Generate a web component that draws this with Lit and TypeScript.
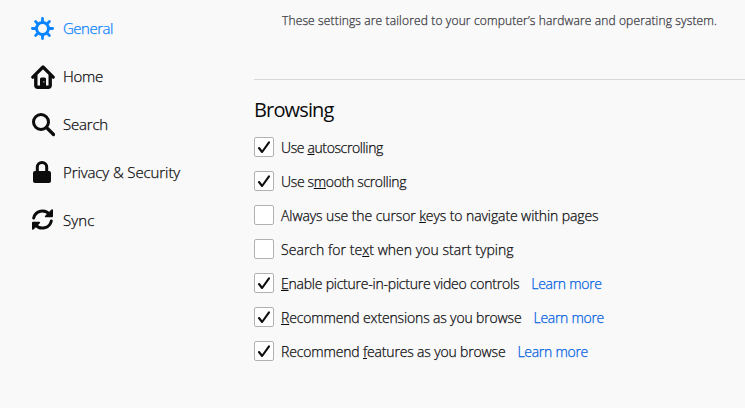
import { LitElement, html, css, svg, nothing } from "lit";
import { customElement } from "lit/decorators.js";

const icons: Record<string, unknown> = {
  General: svg`<circle cx="11.5" cy="11.5" r="6" fill="none" stroke="currentColor" stroke-width="3"/>
    <path d="M11.5 1.4v4M11.5 17.6v4M1.4 11.5h4M17.6 11.5h4M4.6 4.6l2.4 2.4M16 16l2.4 2.4M4.6 18.4l2.4-2.4M16 7l2.4-2.4" fill="none" stroke="currentColor" stroke-width="2.8" stroke-linecap="round"/>`,
  Home: svg`<path d="M1.8 12.2L12 2l10.2 10.2" fill="none" stroke="currentColor" stroke-width="3.2" stroke-linecap="round" stroke-linejoin="round"/>
    <path d="M4.8 10v10.2a2 2 0 0 0 2 2h10.4a2 2 0 0 0 2-2V10" fill="none" stroke="currentColor" stroke-width="3.4"/>
    <path fill-rule="evenodd" d="M9 22v-8a1.5 1.5 0 0 1 1.5-1.5h3a1.5 1.5 0 0 1 1.5 1.5v8zM12.4 16.3v1.3h1v-1.3z" fill="currentColor"/>`,
  Search: svg`<circle cx="10" cy="9" r="7.5" fill="none" stroke="currentColor" stroke-width="3"/>
    <path d="M15.5 14.5l7 7" stroke="currentColor" stroke-width="3.2" stroke-linecap="round"/>`,
  "Privacy & Security": svg`<rect x="2" y="10" width="18" height="12" rx="2" fill="currentColor"/>
    <path d="M6.3 11V6.2a4.7 4.7 0 0 1 9.4 0V11" fill="none" stroke="currentColor" stroke-width="3"/>`,
  Sync: svg`<path d="M2.7 9a9 9 0 0 1 15.8-3.7M20.3 12a9 9 0 0 1-15.8 3.7" fill="none" stroke="currentColor" stroke-width="3" stroke-linecap="round"/>
    <path d="M22 1a.9.9 0 0 0-1.5-.6l-6.3 6.3a.9.9 0 0 0 .6 1.6H21a1 1 0 0 0 1-1zM1 20a.9.9 0 0 0 1.5.6l6.3-6.3a.9.9 0 0 0-.6-1.6H2a1 1 0 0 0-1 1z" fill="currentColor"/>`,
};

const nav = [
  { name: "General", track: -0.5 },
  { name: "Home", track: -0.3 },
  { name: "Search", track: -0.2 },
  { name: "Privacy & Security", track: -0.1 },
  { name: "Sync", track: 0.1 },
];

interface Option { pre: string; key: string; post: string; on: boolean; link?: boolean; track: number; }
const options: Option[] = [
  { pre: "Use ", key: "a", post: "utoscrolling", on: true, track: -0.38 },
  { pre: "Use s", key: "m", post: "ooth scrolling", on: true, track: -0.33 },
  { pre: "Always use the cursor ", key: "k", post: "eys to navigate within pages", on: false, track: -0.095 },
  { pre: "Search for te", key: "x", post: "t when you start typing", on: false, track: 0.045 },
  { pre: "", key: "E", post: "nable picture-in-picture video controls", on: true, link: true, track: -0.23 },
  { pre: "", key: "R", post: "ecommend extensions as you browse", on: true, link: true, track: -0.15 },
  { pre: "Recommend ", key: "f", post: "eatures as you browse", on: true, link: true, track: -0.16 },
];

@customElement("app-root")
class AppRoot extends LitElement {
  static styles = css`
    :host { display: flex; width: 745px; height: 408px; overflow: hidden; background: #f9f9fa; color: #0c0c0d;
      font-family: "Open Sans", "Noto Sans", sans-serif; font-weight: 300; -webkit-text-stroke: 0.25px currentColor; white-space: nowrap; }
    nav { width: 223px; padding: 5px 0 0 31px; box-sizing: border-box; flex: none; margin-right: 31px; }
    .item { display: flex; align-items: center; height: 48px; gap: 8px; font-size: 15px; }
    .item svg { flex: none; width: 24px; height: 24px; }
    .item span { line-height: 20px; padding-bottom: 2px; }
    .active { color: #0a84ff; }
    main { flex: 1; }
    .note { margin: 0; padding: 11px 0 0 28px; font-size: 12px; line-height: 20px; height: 68px; letter-spacing: 0.14px; color: #38383d; }
    h2 { margin: 0; border-top: 1px solid #d7d7db; padding-top: 16px; font-size: 20px; line-height: 28px; height: 34px; font-weight: 400; letter-spacing: -0.85px; -webkit-text-stroke: 0; }
    .row { display: flex; align-items: center; height: 34px; font-size: 14px; line-height: 20px; }
    .text { padding-top: 2px; }
    .box { width: 20px; height: 20px; box-sizing: border-box; border: 1px solid #b1b1b3; border-radius: 2px; background: #fff; margin-right: 7px; flex: none; }
    .box svg { display: block; width: 18px; height: 18px; }
    .key { text-decoration: underline; text-decoration-thickness: 1px; text-underline-offset: 1px; text-decoration-skip-ink: none; }
    .link { color: #0060df; margin-left: 12px; letter-spacing: -0.28px; text-decoration: none; }
  `;
  render() {
    return html`
      <nav>${nav.map((n, i) => html`<div class="item ${i === 0 ? "active" : ""}">
        <svg viewBox="0 0 24 24">${icons[n.name]}</svg><span style="letter-spacing:${n.track}px">${n.name}</span></div>`)}</nav>
      <main>
        <p class="note">These settings are tailored to your computer’s hardware and operating system.</p>
        <h2>Browsing</h2>
        ${options.map(o => html`<div class="row"><span class="box">${o.on
          ? html`<svg viewBox="0 0 18 18"><path d="M4 10l3.1 4L14 4.4" fill="none" stroke="currentColor" stroke-width="2.1" stroke-linecap="round" stroke-linejoin="round"/></svg>` : nothing}</span><span class="text" style="letter-spacing:${o.track}px">${o.pre}<span class="key">${o.key}</span>${o.post}</span>${o.link ? html`<a class="link text">Learn more</a>` : nothing}</div>`)}
      </main>`;
  }
}
